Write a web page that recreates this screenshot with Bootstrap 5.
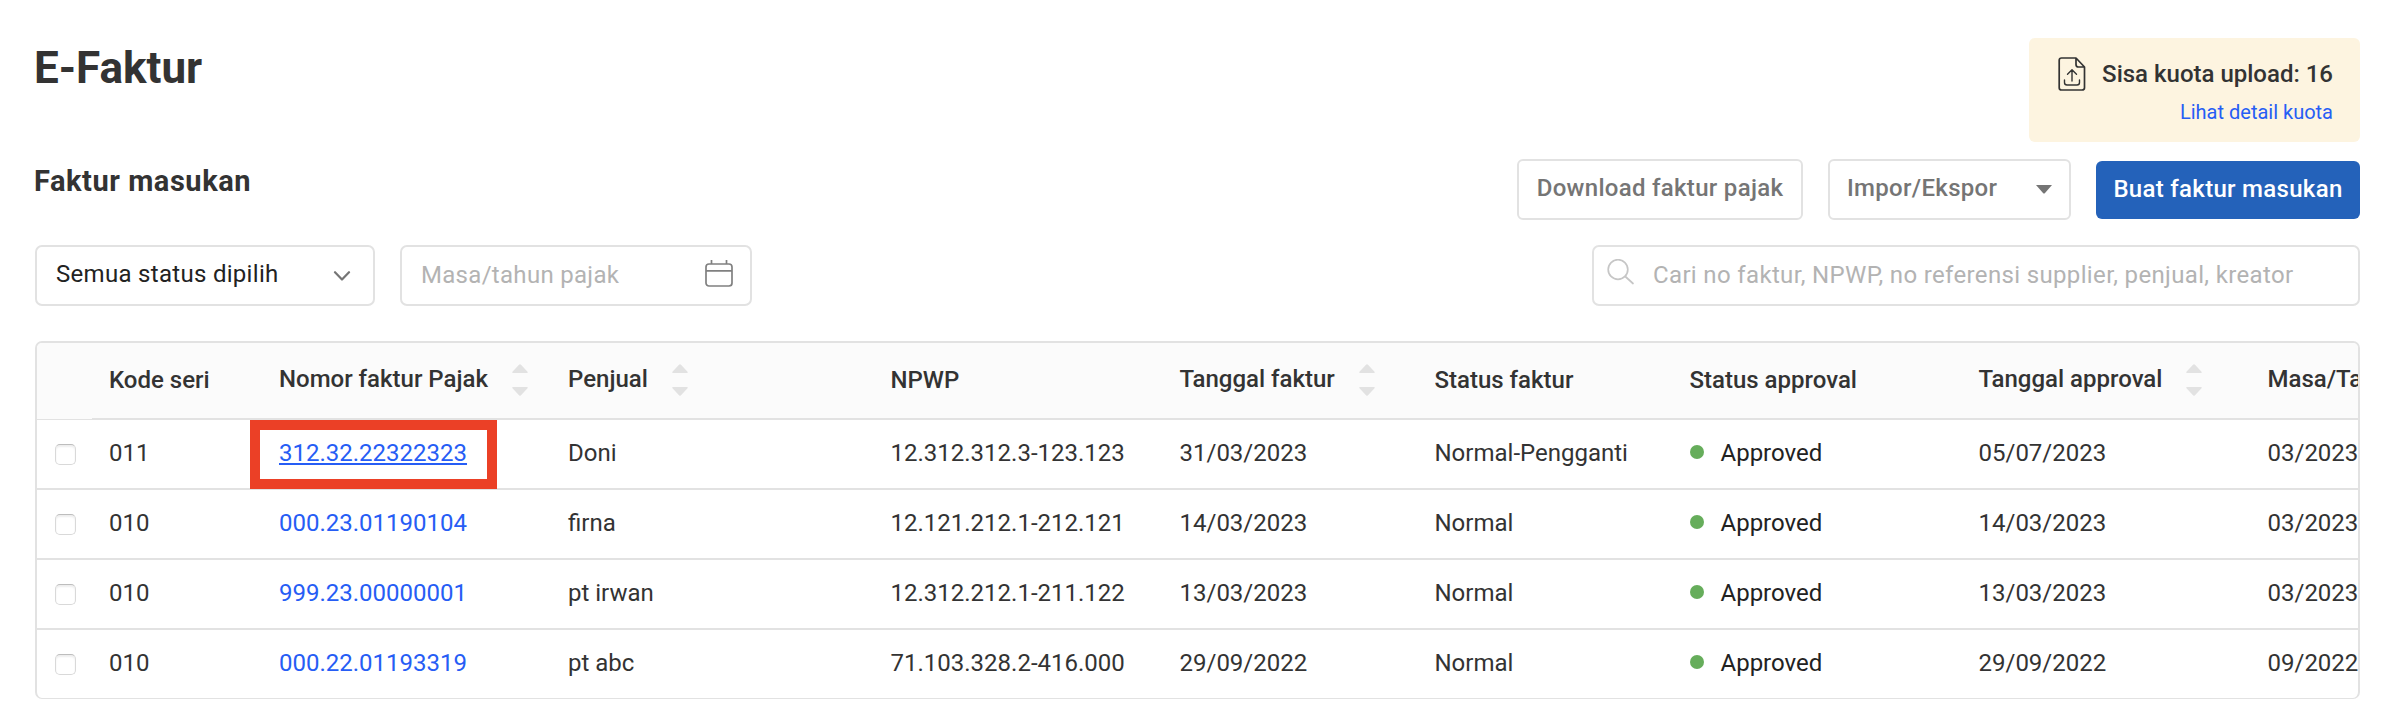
<!DOCTYPE html>
<html lang="id">
<head>
<meta charset="utf-8">
<title>E-Faktur</title>
<meta name="viewport" content="width=device-width, initial-scale=1">
<link href="https://cdn.jsdelivr.net/npm/bootstrap@5.3.0/dist/css/bootstrap.min.css" rel="stylesheet">
<style>
body{font-family:Roboto,"Liberation Sans",sans-serif;font-size:24px;line-height:30px;color:#333;background:#fff;overflow:hidden}
a{color:#265df5;text-decoration:none}
svg{display:block;flex:none}
.page{height:716px;padding:38px 29px 0 35px}
.top-row{height:121px}
.page-title{font-size:44px;line-height:50px;font-weight:700;margin:5px 0 0 -1px}
.section-title{font-size:29px;line-height:34px;font-weight:700;letter-spacing:.55px;margin:5px 0 0 -1px}
.quota{width:331px;height:104px;background:#fdf4e0;border-radius:6px;padding:16px 27px 0 29px}
.quota-main{font-weight:500;height:40px}
.quota-main svg{margin-top:-1px}
.quota-link{font-size:20px;line-height:24px;margin-top:6px}
.actions{height:61px;gap:25px}
.btn{font-size:24px;line-height:30px;font-weight:500;border-radius:6px;padding:0;white-space:nowrap}
.btn-plain{height:61px;border:2px solid #e2e2e2;color:#757575;background:#fff;letter-spacing:.3px}
.btn-plain span{position:relative;top:-2px}
.btn-create{width:264px;height:58px;background:#2462ba;color:#fff;border:0;letter-spacing:.3px;padding-bottom:2px}
.filters{margin-top:25px;height:61px}
.field{height:61px;border:2px solid #e2e2e2;border-radius:7px;background:#fff;color:#222;letter-spacing:.3px}
.hint{color:#b3b3b3;padding-bottom:1px}
.grid-card{margin-top:35px;height:358px;border:2px solid #e2e2e2;border-bottom-width:1px;border-radius:7px;overflow:hidden}
.grid-table{table-layout:fixed;width:2502px;border-collapse:separate;border-spacing:0}
.grid-table th{height:77px;padding:0 0 2px 16px;font-weight:500;background:#fbfbfb;border-bottom:2px solid #e2e2e2;vertical-align:middle;white-space:nowrap}
.grid-table th:first-child{border-bottom-width:1px}
.grid-table td{height:70px;padding:0 0 2px 16px;border-bottom:2px solid #e2e2e2;vertical-align:middle;white-space:nowrap}
.grid-table th:nth-child(-n+4),.grid-table td:nth-child(-n+4){padding-left:17px}
.grid-table th:nth-child(n+5),.grid-table td:nth-child(n+5){padding-left:16.5px}
.grid-table th:first-child,.grid-table td:first-child{padding-left:18px}
.grid-table tr:last-child td{height:68px;border-bottom:0}
.tick{appearance:none;display:block;width:21px;height:21px;margin:3px 0 0;border:1.5px solid #d9d9d9;border-top-color:#bdbdbd;border-radius:5px;background:#fff;box-shadow:inset 0 2px 2px #eee}
.dot{width:14px;height:14px;border-radius:50%;background:#66ad5b;margin:-2px 17px 0 0}
.marked{position:relative}
.marked::after{content:"";position:absolute;left:-12px;top:0;width:247px;height:69px;border:10px solid #eb4026}
.marked a{text-decoration:underline;text-decoration-thickness:2px;text-underline-offset:2px}
</style>
</head>
<body>
<main class="page">
  <header class="top-row d-flex justify-content-between align-items-start">
    <h1 class="page-title">E-Faktur</h1>
    <div class="quota">
      <div class="quota-main d-flex align-items-center justify-content-between">
        <svg width="28" height="36" viewBox="0 0 28 36" fill="none" stroke="#333" stroke-width="1.7" stroke-linejoin="round" stroke-linecap="round"><path d="M18 2H3.5Q1.2 2 1.2 4.3V31.7Q1.2 34 3.500 34H24Q26.500 34 26.500 31.700V11ZM18 2V8.500Q18 11 20.500 11H26.500"/><path d="M14 25V14M9.500 18.200L14 13.700L18.500 18.200M6.500 24V26.500Q6.500 29 9 29H19Q21.500 29 21.500 26.500V24" stroke-width="1.400"/></svg>
        <span>Sisa kuota upload: 16</span>
      </div>
      <div class="quota-link text-end"><a href="#">Lihat detail kuota</a></div>
    </div>
  </header>

  <div class="d-flex justify-content-between align-items-start">
    <h2 class="section-title">Faktur masukan</h2>
    <div class="actions d-flex align-items-center">
      <button class="btn btn-plain" style="width:286px"><span>Download faktur pajak</span></button>
      <button class="btn btn-plain d-flex align-items-center justify-content-between" style="width:243px;padding:0 17px"><span>Impor/Ekspor</span>
        <svg width="16" height="9" viewBox="0 0 16 9"><path d="M0 0H16L9 8Q8 9 7 8Z" fill="#757575"/></svg></button>
      <button class="btn btn-create">Buat faktur masukan</button>
    </div>
  </div>

  <div class="filters d-flex">
    <div class="field d-flex align-items-center justify-content-between" style="width:340px;padding:0 22px 0 19px"><span class="pb-1">Semua status dipilih</span>
      <svg width="18" height="10" viewBox="0 0 18 10" fill="none" stroke="#757575" stroke-width="2.200" stroke-linecap="round" stroke-linejoin="round"><path d="M2 1.200L9 8.500L16 1.200"/></svg></div>
    <div class="field d-flex align-items-center justify-content-between" style="width:352px;margin-left:25px;padding:0 17px 0 19px"><span class="hint">Masa/tahun pajak</span>
      <svg style="margin-top:-5px" width="28" height="27" viewBox="0 0 28 27" fill="none" stroke="#808080" stroke-width="1.700"><rect x="1" y="4" width="26" height="22" rx="3"/><path d="M1 10.800H27M6.500 0V4M21.500 0V4"/></svg></div>
    <div class="field d-flex align-items-center ms-auto" style="width:768px;padding-left:13px">
      <svg class="mb-2" width="28" height="26" viewBox="0 0 28 26" fill="none" stroke="#c6c6c6" stroke-width="1.700" stroke-linecap="round"><circle cx="11" cy="10.500" r="9.800"/><path d="M18.300 17.500L26 24.500"/></svg>
      <span class="hint" style="margin-left:18px;letter-spacing:.35px">Cari no faktur, NPWP, no referensi supplier, penjual, kreator</span></div>
  </div>

  <section class="grid-card">
    <table class="grid-table">
      <colgroup><col style="width:55px"><col style="width:170px"><col style="width:289px"><col style="width:323px"><col style="width:289px"><col style="width:255px"><col style="width:255px"><col style="width:289px"><col style="width:289px"><col style="width:288px"></colgroup>
      <thead id="head"></thead>
      <tbody id="rows"></tbody>
    </table>
  </section>
</main>
<script src="https://cdn.jsdelivr.net/npm/bootstrap@5.3.0/dist/js/bootstrap.bundle.min.js"></script>
<script>
const sort = '<svg width="16" height="32" viewBox="0 0 16 32" fill="#e2e2e2" style="margin-left:24px"><path d="M1 9Q-.5 9 .7 7.500L7 .8Q8 -.2 9 .8L15.300 7.500Q16.500 9 15 9ZM1 23Q-.5 23 .7 24.500L7 31.200Q8 32.200 9 31.200L15.300 24.500Q16.500 23 15 23Z"/></svg>';
const cols = [['Kode seri'],['Nomor faktur Pajak',1],['Penjual',1],['NPWP'],['Tanggal faktur',1],['Status faktur'],['Status approval'],['Tanggal approval',1],['Masa/Tahun pajak',1]];
document.getElementById('head').innerHTML = '<tr><th></th>' + cols.map(([t,s]) => '<th>' + (s ? '<div class="d-flex align-items-center"><span style="margin-top:-2px">' + t + '</span>' + sort + '</div>' : t) + '</th>').join('') + '</tr>';
const rows = [
 ['011','312.32.22322323','Doni','12.312.312.3-123.123','31/03/2023','Normal-Pengganti','05/07/2023','03/2023'],
 ['010','000.23.01190104','firna','12.121.212.1-212.121','14/03/2023','Normal','14/03/2023','03/2023'],
 ['010','999.23.00000001','pt irwan','12.312.212.1-211.122','13/03/2023','Normal','13/03/2023','03/2023'],
 ['010','000.22.01193319','pt abc','71.103.328.2-416.000','29/09/2022','Normal','29/09/2022','09/2022']];
document.getElementById('rows').innerHTML = rows.map((r,i) => `<tr><td><input type="checkbox" class="tick"></td><td>${r[0]}</td><td class="${i ? '' : 'marked'}"><a href="#">${r[1]}</a></td>${r.slice(2,6).map(t => `<td>${t}</td>`).join('')}<td><div class="d-flex align-items-center" style="color:#222"><span class="dot"></span>Approved</div></td><td>${r[6]}</td><td>${r[7]}</td></tr>`).join('');
</script>
</body>
</html>
